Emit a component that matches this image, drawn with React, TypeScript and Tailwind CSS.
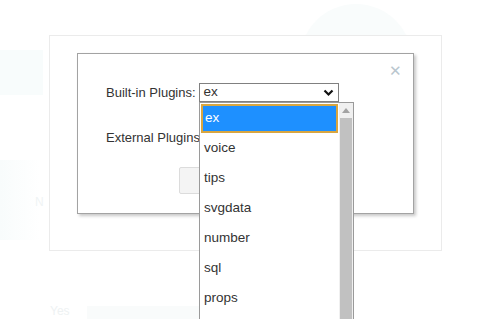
import React from "react";

const plugins = ["ex", "voice", "tips", "svgdata", "number", "sql", "props"];

function Chevron() {
  return (
    <svg width="11" height="8" viewBox="0 0 11 8" className="shrink-0">
      <path d="M1.5 1.5 L5.5 5.5 L9.5 1.5" fill="none" stroke="#111" strokeWidth="2.2" />
    </svg>
  );
}

export default function App() {
  return (
    <div className="relative w-[500px] h-[319px] overflow-hidden bg-white font-['Liberation_Sans',Arial,sans-serif] text-[13px] text-[#333]">
      {/* faint background shapes */}
      <div className="absolute left-0 top-[50px] w-[43px] h-[45px] bg-[#f8fcfc]" />
      <div className="absolute left-[300px] top-[4px] w-[112px] h-[112px] rounded-full bg-[#f9fcfc]" />
      <div className="absolute left-0 top-[160px] w-[40px] h-[80px] bg-gradient-to-r from-[#f8fcfc] to-white" />
      <div className="absolute left-[35px] top-[193px] text-[12px] text-[#f0f4f5]">N</div>
      <div className="absolute left-[50px] top-[305px] text-[12px] leading-none text-[#eef2f3]">Yes</div>
      <div className="absolute left-[87px] top-[306px] w-[115px] h-[13px] bg-[#f9fbfb]" />

      <div className="relative pt-[35px] pl-[49px]">
        <div className="w-[393px] h-[216px] border border-[#ebebeb] bg-white pt-[17px] pl-[27px]">
          <div className="relative w-[337px] h-[161px] border border-[#a3a3a3] bg-white shadow-[2px_2px_3px_rgba(0,0,0,0.22)] pt-[29px] pl-[28px]">
            <span className="absolute right-[11px] top-[9px] text-[15px] leading-none text-[#b9c6ce]">✕</span>

            <div className="flex items-center gap-[3px] h-[19px]">
              <span>Built-in Plugins:</span>
              <div className="flex items-center justify-between w-[140px] h-[19px] border border-[#808080] pl-[4px] pr-[4px] bg-white">
                <span className="text-[13.5px]">ex</span>
                <Chevron />
              </div>
            </div>

            <div className="mt-[26px] h-[19px] flex items-center">External Plugins:</div>

            <div className="mt-[20px] ml-[73px] w-[70px] h-[27px] border border-[#dcdcdc] bg-[#f4f4f4] rounded-[2px]" />
          </div>
        </div>
      </div>

      {/* open dropdown list */}
      <div className="absolute left-[199px] top-[102px] w-[155px] h-[230px] border border-[#9a9a9a] bg-white flex text-[13.5px]">
        <div className="flex-1 flex flex-col">
          {plugins.map((p, i) => (
            <div
              key={p}
              className={
                i === 0
                  ? "shrink-0 h-[29px] mt-[1px] ml-[1px] flex items-center pl-[2px] bg-[#1e90ff] text-white border-2 border-[#d9a640]"
                  : "shrink-0 h-[30px] flex items-center pl-[4px] text-[#333]"
              }
            >
              {p}
            </div>
          ))}
        </div>
        <div className="w-[14px] ml-[1px] bg-[#f0f0f0] flex flex-col">
          <div className="h-[15px] flex items-center justify-center">
            <svg width="8" height="5" viewBox="0 0 8 5">
              <path d="M0 5 L4 0 L8 5 Z" fill="#a3a3a3" />
            </svg>
          </div>
          <div className="flex-1 mx-[1px] bg-[#c1c1c1]" />
        </div>
      </div>
    </div>
  );
}
